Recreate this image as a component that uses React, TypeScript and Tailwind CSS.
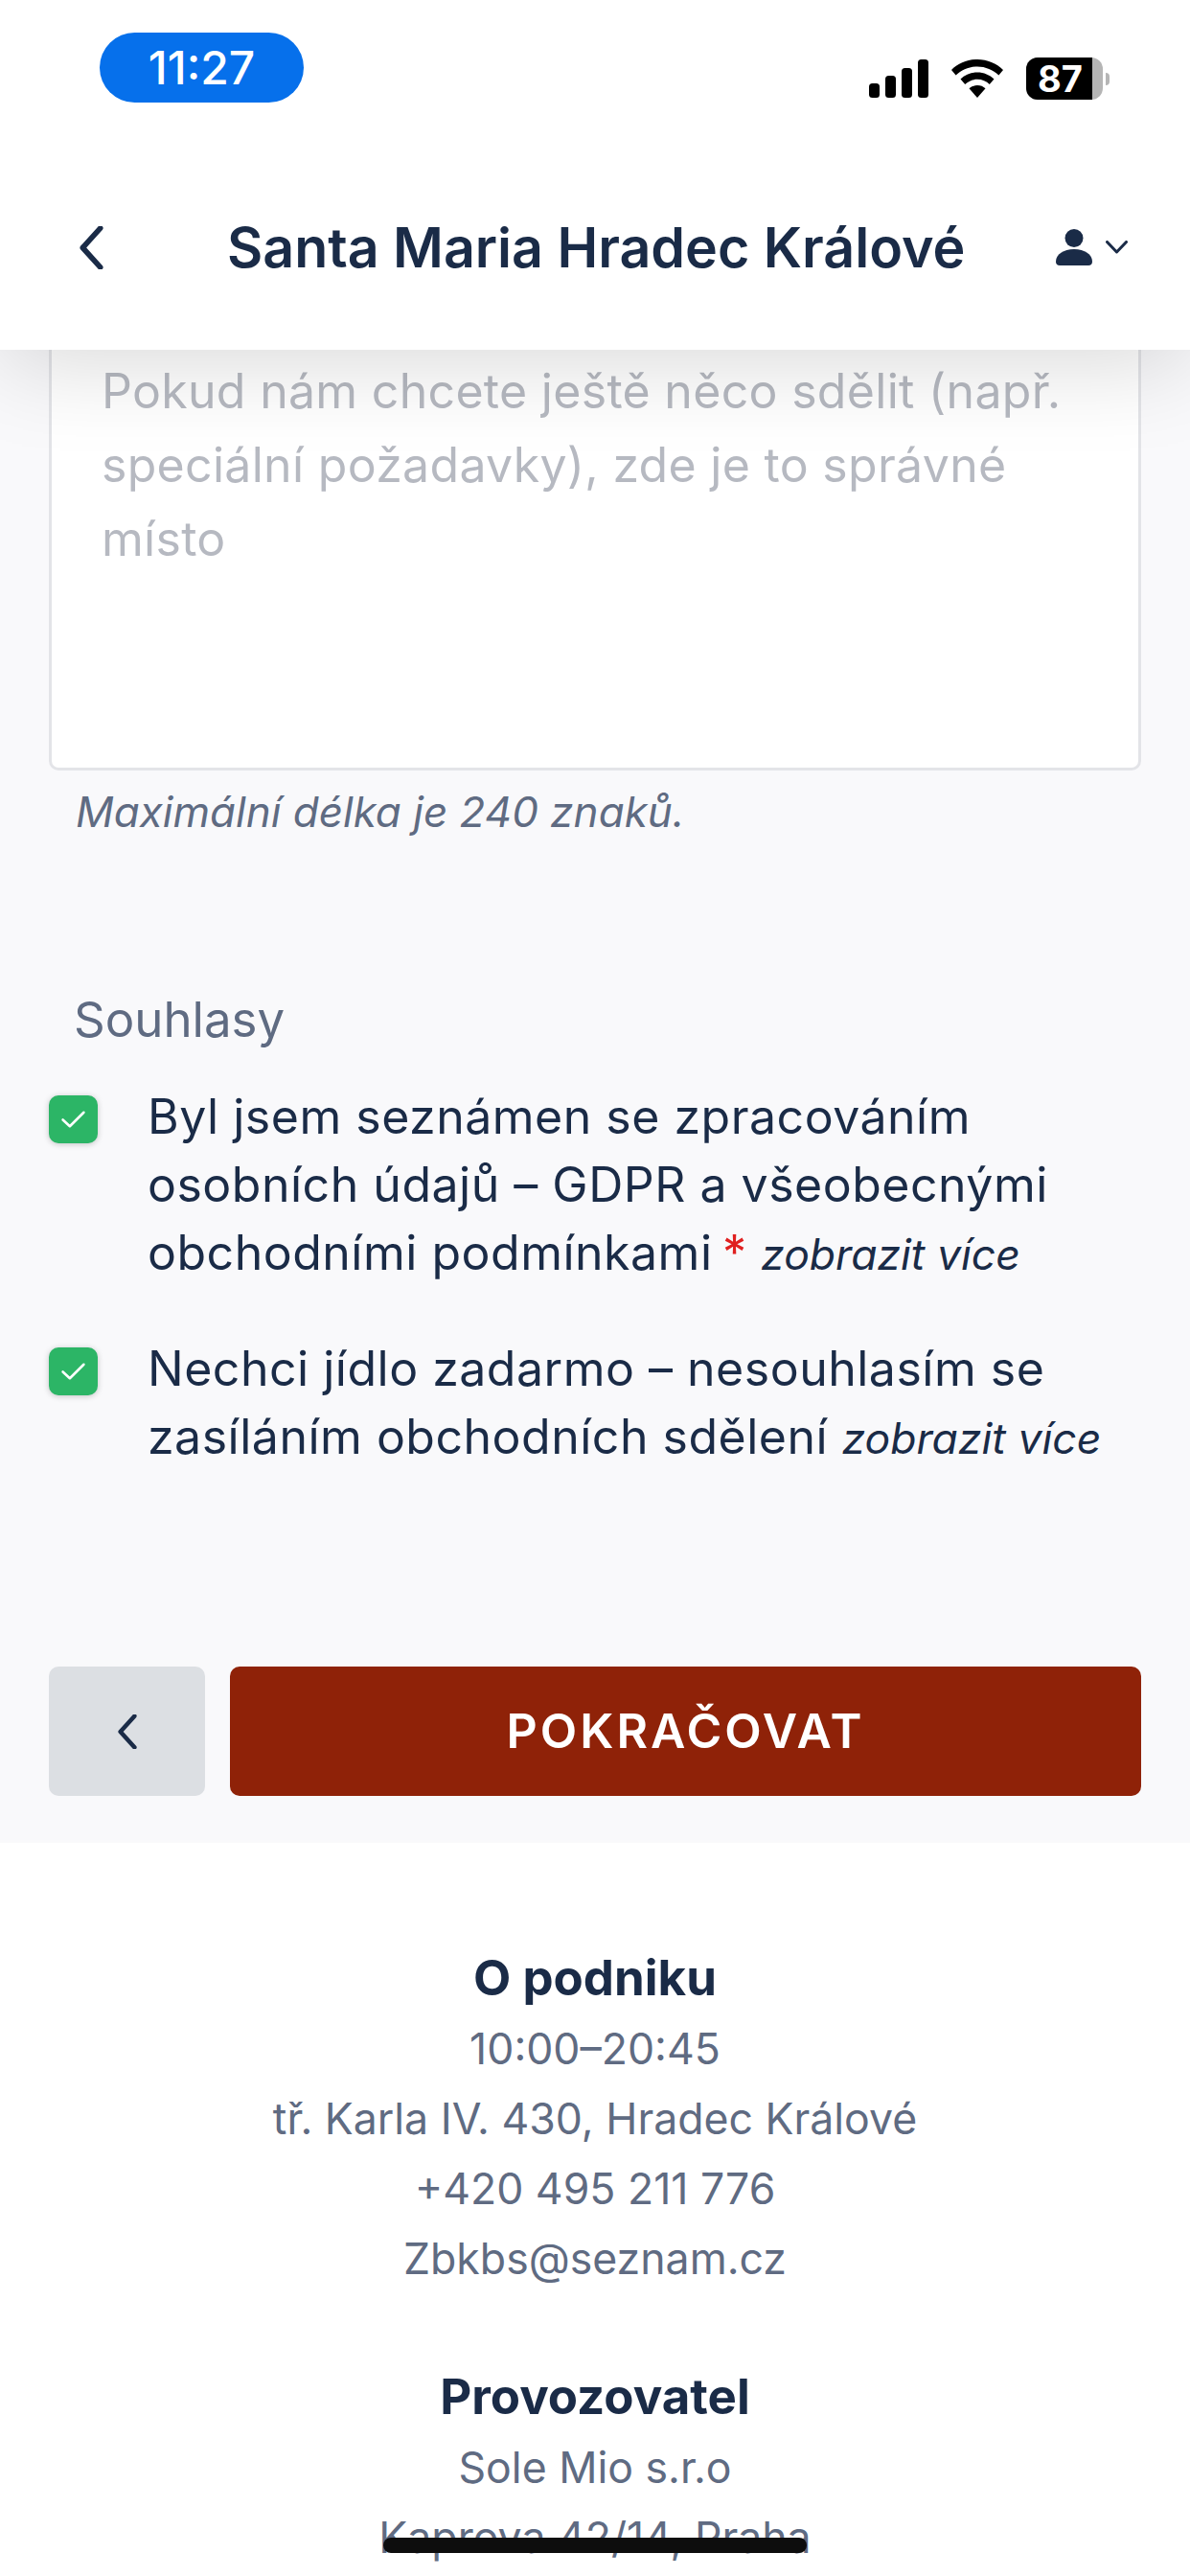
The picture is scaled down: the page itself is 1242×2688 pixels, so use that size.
const font = "font-['Inter',sans-serif]"

const Chevron = ({ className, strokeWidth = 2 }: { className: string; strokeWidth?: number }) => (
  <svg viewBox="0 0 24 44" fill="none" className={className}>
    <path d="M21 2 3 22l18 20" stroke="currentColor" strokeWidth={strokeWidth} strokeLinecap="round" strokeLinejoin="round" />
  </svg>
)

const StatusBar = () => (
  <div className="flex h-[125px] items-start justify-between pt-[34px] pr-[84px] pl-[104px]">
    <div className="flex h-[73px] w-[213px] items-center justify-center rounded-[37px] bg-[#0670eb] text-[48px] font-medium text-white">
      11:27
    </div>
    <div className="mt-[26px] ml-[2px] flex items-center">
      <svg viewBox="0 0 62 40" className="h-[40px] w-[62px]" fill="#000">
        <rect x="0" y="25" width="11" height="15" rx="3.5" />
        <rect x="17" y="17" width="11" height="23" rx="3.5" />
        <rect x="34" y="9" width="11" height="31" rx="3.5" />
        <rect x="51" y="0" width="11" height="40" rx="3.5" />
      </svg>
      <svg viewBox="0 0 54 40" className="ml-[24px] h-[40px] w-[54px]" fill="#000">
        <path d="M27 0c10.500 0 20 4 27 11l-4.600 5.500C43.500 10.800 35.600 7.400 27 7.400S10.500 10.800 4.600 16.500L0 11C7 4 16.500 0 27 0Z" />
        <path d="M27 13.500c6.800 0 13 2.700 17.500 7l-4.700 5.500c-3.300-3.200-7.800-5.200-12.800-5.200s-9.500 2-12.800 5.200L9.500 20.500c4.500-4.300 10.700-7 17.500-7Z" />
        <path d="M27 27c3.300 0 6.300 1.200 8.500 3.300L27 40l-8.500-9.700C20.700 28.200 23.700 27 27 27Z" />
      </svg>
      <div className="ml-[24px] flex h-[44px] w-[80px] overflow-hidden rounded-[12px] bg-[#b5b5b5]">
        <div className="flex h-full w-[69px] items-center justify-center bg-black pl-[2px] text-[38px] font-bold text-white">
          87
        </div>
      </div>
      <div className="ml-[3px] h-[13px] w-[4px] rounded-r-full bg-[#b5b5b5]" />
    </div>
  </div>
)

const Header = () => (
  <div className="flex h-[240px] items-start pt-[110px] pr-[65px] pl-[83px] text-[#1a2b47]">
    <Chevron className="mt-[1px] h-[45px] w-[25px]" strokeWidth={5.5} />
    <h1 className="ml-[129px] w-[766px] text-center text-[57.3px] leading-[46px] font-semibold whitespace-nowrap">
      Santa Maria Hradec Králové
    </h1>
    <div className="mt-[4px] ml-auto flex items-center">
      <svg viewBox="0 0 38 38" className="h-[38px] w-[38px]" fill="currentColor">
        <circle cx="19" cy="9.500" r="9.500" />
        <path d="M0 34c0-7.500 8-13 19-13s19 5.500 19 13c0 2.500-1.500 4-4 4H4c-2.500 0-4-1.500-4-4Z" />
      </svg>
      <svg viewBox="0 0 23 14" fill="none" className="ml-[14px] h-[14px] w-[23px]">
        <path d="M1.500 1.500 11.500 12l10-10.500" stroke="currentColor" strokeWidth="3" strokeLinecap="round" strokeLinejoin="round" />
      </svg>
    </div>
  </div>
)

const Checkbox = () => (
  <div className="flex h-[50px] w-[51px] shrink-0 items-center justify-center rounded-[10px] bg-[#2cb566] shadow-[0_1px_6px_rgba(0,0,0,0.22)]">
    <svg viewBox="0 0 28 22" fill="none" className="h-[20px] w-[27px]">
      <path d="M2 11.500 10 19 26 3" stroke="#fff" strokeWidth="2.800" strokeLinecap="round" strokeLinejoin="round" />
    </svg>
  </div>
)

const Consent = ({ children, className }: { children: React.ReactNode; className: string }) => (
  <div className={`flex ${className}`}>
    <Checkbox />
    <p className="-mt-[13px] ml-[52px] text-[50px] leading-[71px] tracking-[0.5px] text-[#1a2b47]">{children}</p>
  </div>
)

const More = () => <em className="text-[44.5px] tracking-normal">zobrazit více</em>

const FooterBlock = ({ title, lines, className = '' }: { title: string; lines: string[]; className?: string }) => (
  <div className={`flex flex-col items-center ${className}`}>
    <h2 className="text-[51px] leading-[77px] font-bold text-[#1a2b47]">{title}</h2>
    {lines.map((line) => (
      <p key={line} className="text-[44.6px] leading-[73px] text-[#5f6b82]">
        {line}
      </p>
    ))}
  </div>
)

export default function App() {
  return (
    <div className={`relative h-[2688px] w-[1242px] overflow-hidden bg-white ${font}`}>
      <div className="relative z-10 bg-white shadow-[0_15px_90px_rgba(0,0,0,0.15)]">
        <StatusBar />
        <Header />
      </div>

      <main className="flex h-[1558px] flex-col bg-[#f9f9fb] px-[51px]">
        <div className="h-[439px] rounded-b-[10px] border-x-[3px] border-b-[3px] border-[#e3e4e8] bg-white pt-[5px] pl-[52px]">
          <p className="text-[50px] leading-[77px] tracking-[0.3px] text-[#b6b9c1]">
            Pokud nám chcete ještě něco sdělit (např.
            <br />
            speciální požadavky), zde je to správné
            <br />
            místo
          </p>
        </div>
        <p className="mt-[18px] ml-[28px] text-[44px] leading-[50px] text-[#5f6b82] italic">Maximální délka je 240 znaků.</p>
        <p className="mt-[162px] ml-[26px] text-[51px] leading-[60px] text-[#5f6b82]">Souhlasy</p>
        <Consent className="mt-[49px]">
          Byl jsem seznámen se zpracováním osobních údajů – GDPR a všeobecnými obchodními podmínkami{' '}
          <span className="-ml-[4px] text-[#e02020]">*</span> <More />
        </Consent>
        <Consent className="mt-[61px]">
          Nechci jídlo zadarmo – nesouhlasím se zasíláním obchodních sdělení <More />
        </Consent>
        <div className="mt-[202px] flex gap-[26px]">
          <button className="flex h-[135px] w-[163px] items-center justify-center rounded-[10px] bg-[#dcdfe3] text-[#1a2b47]">
            <Chevron className="h-[36px] w-[20px]" strokeWidth={5.5} />
          </button>
          <button className="flex h-[135px] flex-1 items-center justify-center rounded-[10px] bg-[#8f2208] text-[50px] font-semibold tracking-[3px] text-white">
            POKRAČOVAT
          </button>
        </div>
      </main>

      <footer className="pt-[102px]">
        <FooterBlock title="O podniku" lines={['10:00–20:45', 'tř. Karla IV. 430, Hradec Králové', '+420 495 211 776', 'Zbkbs@seznam.cz']} />
        <FooterBlock className="mt-[68px]" title="Provozovatel" lines={['Sole Mio s.r.o', 'Kaprova 42/14, Praha']} />
      </footer>

      {/* black scribble over the last line */}
      <div className="absolute top-[2648px] left-[400px] h-[16px] w-[442px] rounded-full bg-[#0d0d0d]" />
    </div>
  )
}
